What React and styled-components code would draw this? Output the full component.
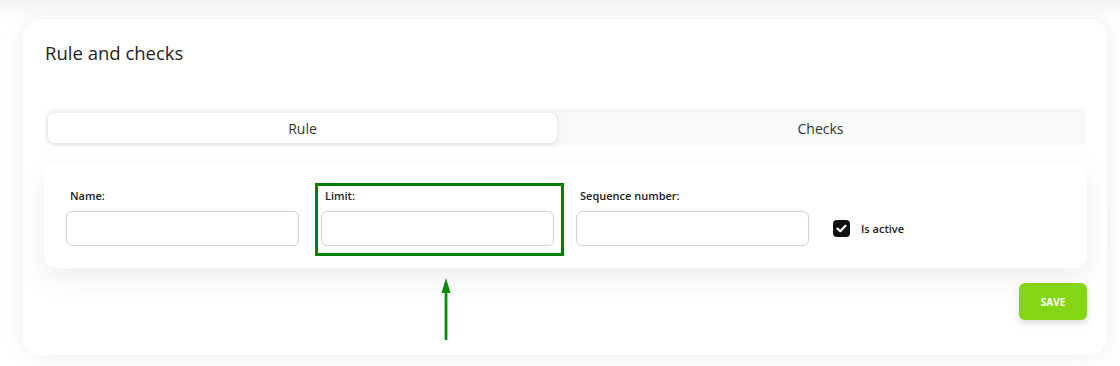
import React from 'react';
import styled, { createGlobalStyle } from 'styled-components';

const GlobalStyle = createGlobalStyle`
  body {
    margin: 0;
    background: linear-gradient(#f2f2f2, #ffffff 18px);
    font-family: "Open Sans", "Liberation Sans", sans-serif;
    color: #212121;
  }
`;

const Page = styled.div`
  padding: 20px 13px 10px 23px;
  height: 366px;
  box-sizing: border-box;
`;

const Card = styled.div`
  background: #fff;
  border-radius: 16px;
  box-shadow: 0 0 22px rgba(0, 0, 0, 0.07);
  padding: 20px 20px 35px 21px;
`;

const Title = styled.h2`
  margin: 0 0 0 1px;
  font-size: 18.5px;
  font-weight: 400;
  line-height: 25px;
  color: #1f1f1f;
`;

const Tabs = styled.div`
  margin: 44px 0 0 1px;
  display: grid;
  grid-template-columns: 509px 1fr;
  padding: 4px 3px 3px 3px;
  background: #f8f9fa;
  border-radius: 9px;
`;

const Tab = styled.button`
  border: 0;
  height: 30px;
  font-family: inherit;
  font-size: 14px;
  color: #333;
  border-radius: 7px;
  background: ${p => (p.$active ? '#fff' : 'transparent')};
  box-shadow: ${p => (p.$active ? '0 1px 4px rgba(0,0,0,0.13)' : 'none')};
  cursor: pointer;
`;

const FormCard = styled.div`
  margin-top: 17px;
  background: #fff;
  border-radius: 12px;
  box-shadow: 0 10px 28px rgba(0, 0, 0, 0.07);
  padding: 25px 0 22px 22px;
  display: flex;
  align-items: flex-end;
`;

const Field = styled.div`
  position: relative;
  width: 255px;
  display: flex;
  flex-direction: column;
`;

const Label = styled.label`
  font-size: 11px;
  font-weight: 600;
  line-height: 15px;
  color: #1c1c1c;
  padding-left: 4px;
  margin-bottom: 8px;
`;

const Input = styled.input`
  width: 233px;
  height: 35px;
  box-sizing: border-box;
  border: 1px solid #d2d2d2;
  border-radius: 6px;
  font-family: inherit;
  outline: none;
`;

const Highlight = styled.div`
  position: absolute;
  left: -6px;
  top: -5px;
  width: 249px;
  height: 73px;
  box-sizing: border-box;
  border: 3px solid #008000;
  pointer-events: none;
`;

const Arrow = styled.svg`
  position: absolute;
  left: 120px;
  top: 90px;
`;

const CheckRow = styled.label`
  display: flex;
  align-items: center;
  gap: 11px;
  height: 35px;
  margin-left: 2px;
  font-size: 11px;
  font-weight: 600;
  color: #1c1c1c;
`;

const CheckBox = styled.span`
  width: 17px;
  height: 17px;
  border-radius: 4px;
  background: #111;
  display: flex;
  align-items: center;
  justify-content: center;
`;

const Actions = styled.div`
  display: flex;
  justify-content: flex-end;
  margin-top: 15px;
`;

const SaveButton = styled.button`
  width: 68px;
  height: 37px;
  border: 0;
  border-radius: 6px;
  background: #84d614;
  color: #fff;
  font-family: inherit;
  font-size: 10px;
  font-weight: 700;
  box-shadow: 0 3px 6px rgba(0, 0, 0, 0.15);
  cursor: pointer;
`;

const fields = [
  { id: 'name', label: 'Name:' },
  { id: 'limit', label: 'Limit:', marked: true },
  { id: 'seq', label: 'Sequence number:' },
];

export default function App() {
  return (
    <Page>
      <GlobalStyle />
      <Card>
        <Title>Rule and checks</Title>
        <Tabs>
          <Tab $active>Rule</Tab>
          <Tab>Checks</Tab>
        </Tabs>
        <FormCard>
          {fields.map(f => (
            <Field key={f.id}>
              <Label htmlFor={f.id}>{f.label}</Label>
              <Input id={f.id} />
              {f.marked && (
                <>
                  <Highlight />
                  <Arrow width="10" height="64" viewBox="0 0 10 64">
                    <path d="M5 0 L9.5 15 L0.5 15 Z" fill="#0a8a0a" />
                    <rect x="3.6" y="13" width="2.8" height="49" fill="#0a8a0a" />
                  </Arrow>
                </>
              )}
            </Field>
          ))}
          <CheckRow>
            <CheckBox>
              <svg width="11" height="9" viewBox="0 0 11 9">
                <path d="M1.5 4.6 L4.2 7.2 L9.5 1.8" fill="none" stroke="#fff" strokeWidth="2.2" strokeLinecap="round" strokeLinejoin="round" />
              </svg>
            </CheckBox>
            Is active
          </CheckRow>
        </FormCard>
        <Actions>
          <SaveButton>SAVE</SaveButton>
        </Actions>
      </Card>
    </Page>
  );
}
